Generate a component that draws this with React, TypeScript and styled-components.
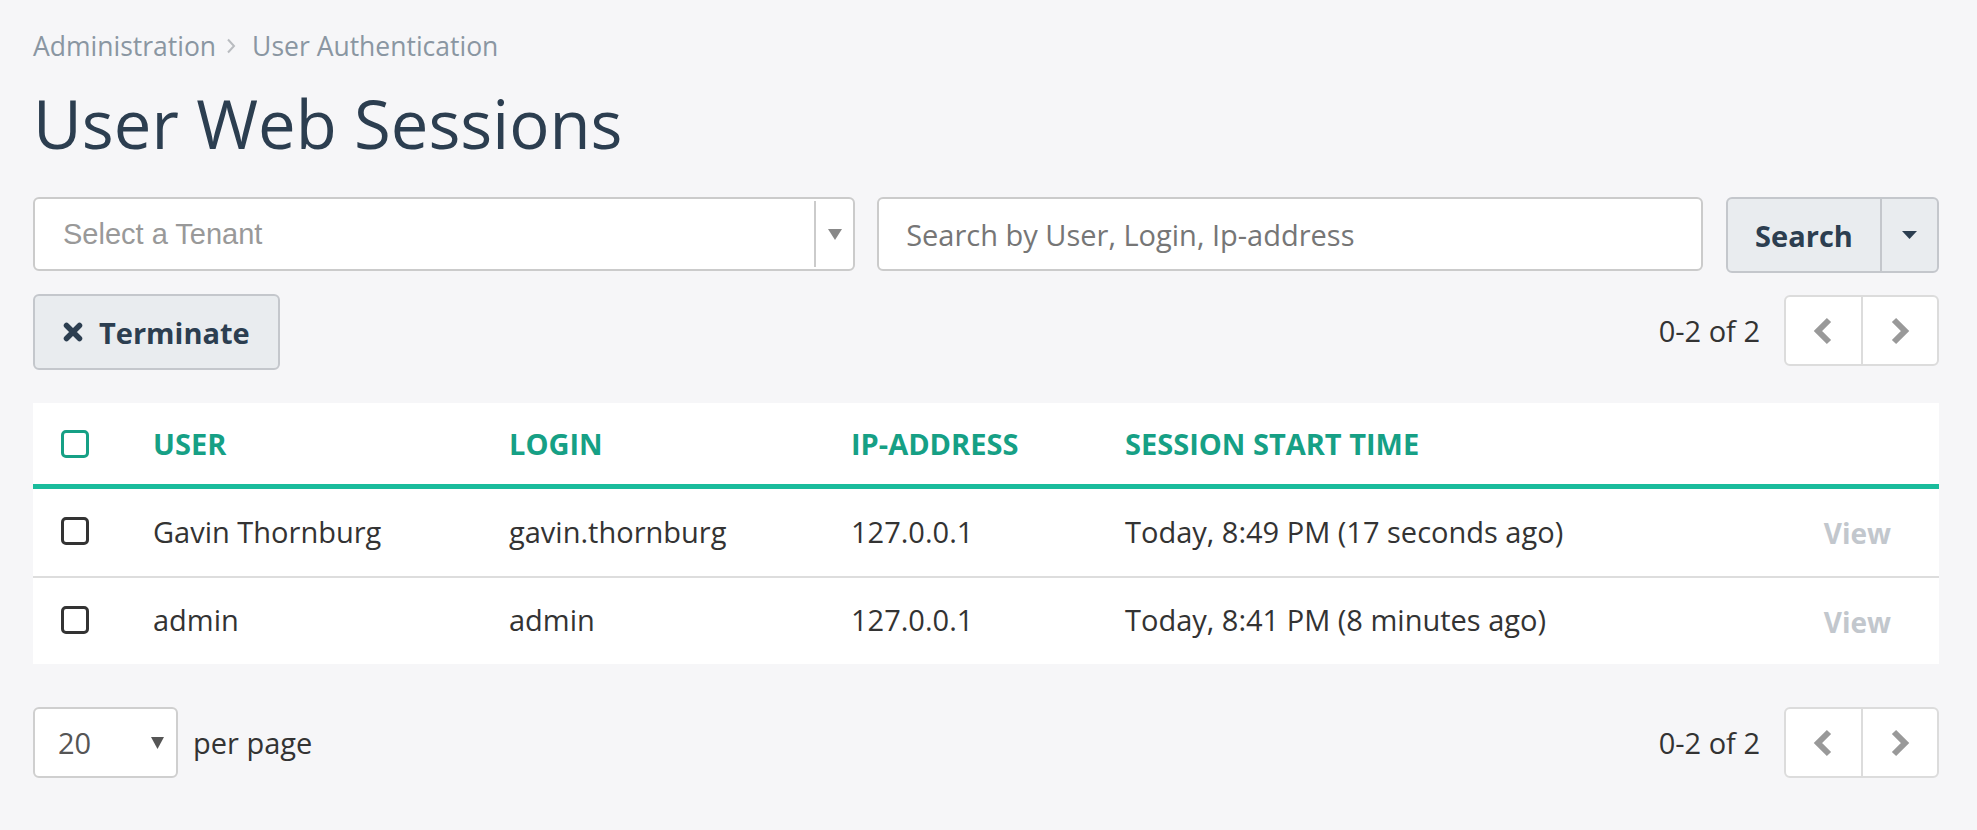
import React from "react";
import styled, { createGlobalStyle } from "styled-components";

const GlobalStyle = createGlobalStyle`
  html, body {
    margin: 0;
    padding: 0;
    background: #f6f6f8;
    font-family: "Open Sans", "Noto Sans", sans-serif;
    color: #333;
  }
  * { box-sizing: border-box; }
`;

const Page = styled.div`
  padding: 28px 38px 52px 33px;
  min-height: 830px;
`;

const Breadcrumb = styled.nav`
  display: flex;
  align-items: center;
  font-size: 26.5px;
  line-height: 36px;
  color: #8a96a2;
`;

const CrumbSep = styled.span`
  display: inline-flex;
  margin: 0 16px 0 10px;
`;

const Title = styled.h1`
  margin: 19px 0 0;
  font-size: 67px;
  line-height: 80px;
  font-weight: 400;
  color: #2c3e50;
`;

const FilterRow = styled.div`
  display: flex;
  align-items: flex-start;
  margin-top: 34px;
`;

const TenantSelect = styled.div`
  flex: 1 1 50%;
  min-width: 0;
  height: 74px;
  display: flex;
  background: #fff;
  border: 2px solid #cbcbcb;
  border-radius: 6px;
  margin-right: 22px;
`;

const TenantPlaceholder = styled.div`
  flex: 1;
  display: flex;
  align-items: center;
  padding-left: 28px;
  font-family: "Liberation Sans", Arial, sans-serif;
  font-size: 29px;
  color: #999;
`;

const TenantArrow = styled.div`
  width: 39px;
  margin: 2px 0;
  border-left: 2px solid #cbcbcb;
  display: flex;
  align-items: center;
  justify-content: center;
`;

const SearchInput = styled.input`
  flex: 1 1 50%;
  min-width: 0;
  width: 0;
  height: 74px;
  border: 2px solid #cbcbcb;
  border-radius: 6px;
  background: #fff;
  padding: 0 0 0 27px;
  font-family: "Open Sans", sans-serif;
  font-size: 29px;
  color: #333;
  margin-right: 23px;
  outline: none;
  &::placeholder {
    color: #767676;
  }
`;

const SplitButton = styled.div`
  flex: 0 0 213px;
  height: 76px;
  display: flex;
  background: #e9ecef;
  border: 2px solid #c4c7cc;
  border-radius: 6px;
`;

const SplitMain = styled.div`
  width: 154px;
  display: flex;
  align-items: center;
  justify-content: center;
  font-size: 29px;
  font-weight: 700;
  color: #2c3e50;
  border-right: 2px solid #c4c7cc;
`;

const SplitCaret = styled.div`
  flex: 1;
  display: flex;
  align-items: center;
  justify-content: center;
`;

const ActionRow = styled.div`
  display: flex;
  align-items: flex-start;
  justify-content: space-between;
  margin-top: 21px;
`;

const TerminateButton = styled.button`
  height: 76px;
  width: 247px;
  display: flex;
  align-items: center;
  gap: 15px;
  padding: 0 0 0 27px;
  background: #e9ecef;
  border: 2px solid #c4c7cc;
  border-radius: 6px;
  font-family: "Open Sans", sans-serif;
  font-size: 29px;
  font-weight: 700;
  color: #2c3e50;
`;

const Pager = styled.div<{ $offset?: number }>`
  display: flex;
  align-items: center;
  gap: 24px;
  margin-top: ${(p) => p.$offset ?? 0}px;
`;

const PagerCount = styled.span`
  font-size: 29px;
  color: #333;
`;

const PagerGroup = styled.div`
  display: flex;
  width: 155px;
  height: 71px;
  background: #fff;
  border: 2px solid #dcdcdc;
  border-radius: 6px;
`;

const PagerButton = styled.div<{ $divider?: boolean }>`
  flex: 1;
  display: flex;
  align-items: center;
  justify-content: center;
  border-right: ${(p) => (p.$divider ? "2px solid #dcdcdc" : "none")};
`;

const Table = styled.div`
  margin-top: 33px;
  background: #fff;
`;

const Row = styled.div<{ $head?: boolean; $last?: boolean }>`
  display: grid;
  grid-template-columns: 120px 356px 342px 274px 1fr auto;
  align-items: center;
  height: ${(p) => (p.$head ? "86px" : p.$last ? "86px" : "89px")};
  padding-bottom: ${(p) => (p.$head ? "0" : "3px")};
  border-bottom: ${(p) =>
    p.$head ? "5px solid #1abc9c" : p.$last ? "none" : "2px solid #dddddd"};
  font-size: 29px;
  font-weight: ${(p) => (p.$head ? 700 : 400)};
  color: ${(p) => (p.$head ? "#16a085" : "#333")};
  text-transform: ${(p) => (p.$head ? "uppercase" : "none")};
`;

const CheckCell = styled.div`
  padding-left: 28px;
  display: flex;
  align-items: center;
`;

const Checkbox = styled.span<{ $accent?: boolean }>`
  width: 28px;
  height: 28px;
  border: 3px solid ${(p) => (p.$accent ? "#16a085" : "#333")};
  border-radius: 5px;
  display: inline-block;
`;

const Cell = styled.div`
  white-space: nowrap;
`;

const ViewLink = styled.a`
  padding: 4px 48px 0 0;
  font-weight: 700;
  font-size: 28px;
  color: #c2c7cd;
  text-decoration: none;
`;

const FooterRow = styled.div`
  display: flex;
  align-items: center;
  justify-content: space-between;
  margin-top: 43px;
`;

const PerPage = styled.div`
  display: flex;
  align-items: center;
  gap: 15px;
  font-size: 29px;
  color: #333;
`;

const PerPageSelect = styled.div`
  width: 145px;
  height: 71px;
  display: flex;
  align-items: center;
  justify-content: space-between;
  padding: 0 12px 0 23px;
  background: #fff;
  border: 2px solid #cfcfcf;
  border-radius: 6px;
  color: #555;
`;

const Chevron = ({ dir }: { dir: "left" | "right" }) => (
  <svg width="22" height="28" viewBox="0 0 22 28">
    <polyline
      points={dir === "left" ? "17,3 6,14 17,25" : "5,3 16,14 5,25"}
      fill="none"
      stroke="#999"
      strokeWidth="6"
      strokeLinejoin="miter"
    />
  </svg>
);

const Triangle = ({ color, w, h }: { color: string; w: number; h: number }) => (
  <svg width={w} height={h} viewBox={`0 0 ${w} ${h}`}>
    <polygon points={`0,0 ${w},0 ${w / 2},${h}`} fill={color} />
  </svg>
);

const Pagination = ({ offset }: { offset?: number }) => (
  <Pager $offset={offset}>
    <PagerCount>0-2 of 2</PagerCount>
    <PagerGroup>
      <PagerButton $divider>
        <Chevron dir="left" />
      </PagerButton>
      <PagerButton>
        <Chevron dir="right" />
      </PagerButton>
    </PagerGroup>
  </Pager>
);

const sessions = [
  {
    user: "Gavin Thornburg",
    login: "gavin.thornburg",
    ip: "127.0.0.1",
    start: "Today, 8:49 PM (17 seconds ago)",
  },
  {
    user: "admin",
    login: "admin",
    ip: "127.0.0.1",
    start: "Today, 8:41 PM (8 minutes ago)",
  },
];

export default function App() {
  return (
    <>
      <GlobalStyle />
      <Page>
        <Breadcrumb>
          <span>Administration</span>
          <CrumbSep>
            <svg width="10" height="16" viewBox="0 0 10 16">
              <polyline points="2,1.5 8,8 2,14.5" fill="none" stroke="#b9bcc0" strokeWidth="2" />
            </svg>
          </CrumbSep>
          <span>User Authentication</span>
        </Breadcrumb>
        <Title>User Web Sessions</Title>

        <FilterRow>
          <TenantSelect>
            <TenantPlaceholder>Select a Tenant</TenantPlaceholder>
            <TenantArrow>
              <Triangle color="#888" w={14} h={11} />
            </TenantArrow>
          </TenantSelect>
          <SearchInput placeholder="Search by User, Login, Ip-address" />
          <SplitButton>
            <SplitMain>Search</SplitMain>
            <SplitCaret>
              <Triangle color="#2c3e50" w={15} h={8} />
            </SplitCaret>
          </SplitButton>
        </FilterRow>

        <ActionRow>
          <TerminateButton>
            <svg width="22" height="22" viewBox="0 0 22 22">
              <path d="M4.5 4.5 L17.5 17.5 M17.5 4.5 L4.5 17.5" stroke="#2c3e50" strokeWidth="5.5" strokeLinecap="round" />
            </svg>
            Terminate
          </TerminateButton>
          <Pagination offset={1} />
        </ActionRow>

        <Table>
          <Row $head>
            <CheckCell>
              <Checkbox $accent />
            </CheckCell>
            <Cell>User</Cell>
            <Cell>Login</Cell>
            <Cell>IP-Address</Cell>
            <Cell>Session Start Time</Cell>
            <Cell />
          </Row>
          {sessions.map((s, i) => (
            <Row key={s.login} $last={i === sessions.length - 1}>
              <CheckCell>
                <Checkbox />
              </CheckCell>
              <Cell>{s.user}</Cell>
              <Cell>{s.login}</Cell>
              <Cell>{s.ip}</Cell>
              <Cell>{s.start}</Cell>
              <ViewLink href="#">View</ViewLink>
            </Row>
          ))}
        </Table>

        <FooterRow>
          <PerPage>
            <PerPageSelect>
              <span>20</span>
              <Triangle color="#555" w={13} h={12} />
            </PerPageSelect>
            <span>per page</span>
          </PerPage>
          <Pagination />
        </FooterRow>
      </Page>
    </>
  );
}
